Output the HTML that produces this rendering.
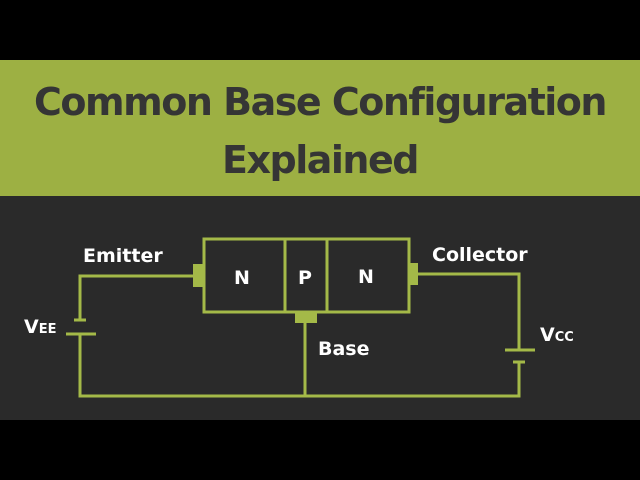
<!DOCTYPE html>
<html><head><style>
html,body{margin:0;padding:0;width:640px;height:480px;overflow:hidden;background:#000;}
.g{position:absolute;left:0;top:60px;width:640px;height:136px;background:#9db043;}
.d{position:absolute;left:0;top:196px;width:640px;height:224px;background:#2a2a2a;}
.t{position:absolute;left:0;width:640px;text-align:center;font-family:"DejaVu Sans","Liberation Sans",sans-serif;font-weight:bold;color:#353535;font-size:38px;letter-spacing:-1.5px;}
</style></head><body>
<div class="g"></div><div class="d"></div>
<div class="t" style="top:80px;">Common Base Configuration</div>
<div class="t" style="top:138px;">Explained</div>
<svg width="640" height="480" style="position:absolute;left:0;top:0" font-family="'DejaVu Sans','Liberation Sans',sans-serif" font-weight="bold">
<g stroke="#a4b948" stroke-width="3" fill="none">
<rect x="204" y="239" width="205" height="73"/>
<line x1="285" y1="239" x2="285" y2="312"/>
<line x1="327" y1="239" x2="327" y2="312"/>
<polyline points="194,276 80,276 80,320"/>
<line x1="74" y1="320" x2="86" y2="320"/>
<line x1="66" y1="334" x2="96" y2="334"/>
<polyline points="80,334 80,396 519,396 519,362"/>
<line x1="305" y1="322" x2="305" y2="396"/>
<polyline points="417,274 519,274 519,350"/>
<line x1="505" y1="350" x2="535" y2="350"/>
<line x1="513" y1="362" x2="525" y2="362"/>
</g>
<g fill="#a4b948">
<rect x="193" y="264" width="11" height="23"/>
<rect x="409" y="263" width="9" height="22"/>
<rect x="295" y="312" width="22" height="11"/>
</g>
<g fill="#fff" font-size="19">
<text x="242" y="284" text-anchor="middle">N</text>
<text x="305" y="284" text-anchor="middle">P</text>
<text x="366" y="283" text-anchor="middle">N</text>
<text x="83" y="262">Emitter</text>
<text x="432" y="261">Collector</text>
<text x="318" y="355">Base</text>
<text x="24" y="333">V<tspan font-size="13">EE</tspan></text>
<text x="540" y="341">V<tspan font-size="13">CC</tspan></text>
</g>
</svg>
</body></html>
